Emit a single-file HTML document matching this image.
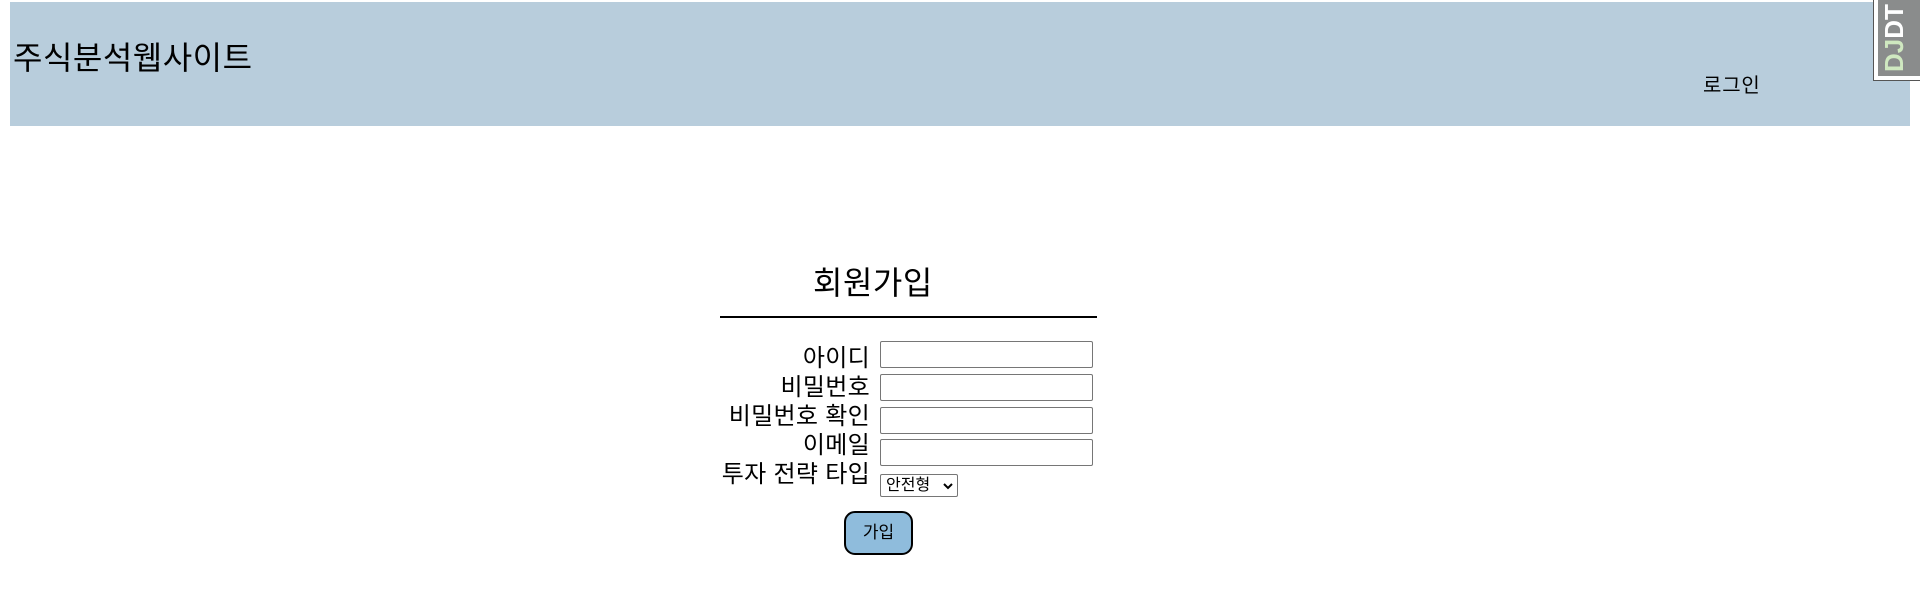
<!DOCTYPE html>
<html><head><meta charset="utf-8"><style>
body{margin:0;width:1920px;height:613px;background:#fff;position:relative;overflow:hidden;font-family:"Liberation Sans","Noto Sans CJK KR",sans-serif;color:#000}
.a{position:absolute;white-space:nowrap;line-height:1}
.hdr{position:absolute;left:10px;top:2px;width:1900px;height:124px;background:#b8cddc}
.lbl{position:absolute;right:1050px;font-size:24px;letter-spacing:0.3px;line-height:1;white-space:nowrap}
.inp{position:absolute;left:880px;width:211px;height:25px;border:1px solid #767676;border-radius:2px;background:#fff}
</style></head><body>
<div class="hdr"></div>
<div class="a" style="left:13px;top:42px;font-size:32px;letter-spacing:0.5px">주식분석웹사이트</div>
<div class="a" style="left:1703px;top:76px;font-size:20px;letter-spacing:0.8px">로그인</div>
<div class="a" style="left:1873px;top:0;width:47px;height:80px;background:#fff;border-left:1px solid #555;border-bottom:1px solid #555"></div>
<div class="a" style="left:1878px;top:0;width:42px;height:76px;background:#8a8c8c"></div>
<div class="a" style="left:1881px;top:72px;transform:rotate(-90deg);transform-origin:0 0;font-size:26px;font-weight:bold;width:76px;color:#fff"><span style="color:#cfe8c0">DJ</span>DT</div>

<div class="a" style="left:813px;top:267px;font-size:32px;letter-spacing:0.5px">회원가입</div>
<div class="a" style="left:720px;top:316px;width:377px;height:2px;background:#000"></div>

<div class="lbl" style="top:347px">아이디</div>
<div class="lbl" style="top:376px">비밀번호</div>
<div class="lbl" style="top:405px">비밀번호 확인</div>
<div class="lbl" style="top:434px">이메일</div>
<div class="lbl" style="top:463px">투자 전략 타입</div>

<div class="inp" style="top:341px"></div>
<div class="inp" style="top:374px"></div>
<div class="inp" style="top:407px"></div>
<div class="inp" style="top:439px"></div>
<div class="a" style="left:880px;top:474px;width:76px;height:21px;border:1px solid #767676;border-radius:2px;font-size:16px;line-height:21px"><span style="padding-left:5px">안전형</span><svg style="position:absolute;right:4px;top:7px" width="10" height="8" viewBox="0 0 10 8"><path d="M1 2l4 4 4-4" fill="none" stroke="#000" stroke-width="2"/></svg></div>

<div class="a" style="left:844px;top:511px;width:65px;height:40px;border:2px solid #000;border-radius:11px;background:#8fbcdc;font-size:17px;line-height:40px;text-align:center">가입</div>
</body></html>
